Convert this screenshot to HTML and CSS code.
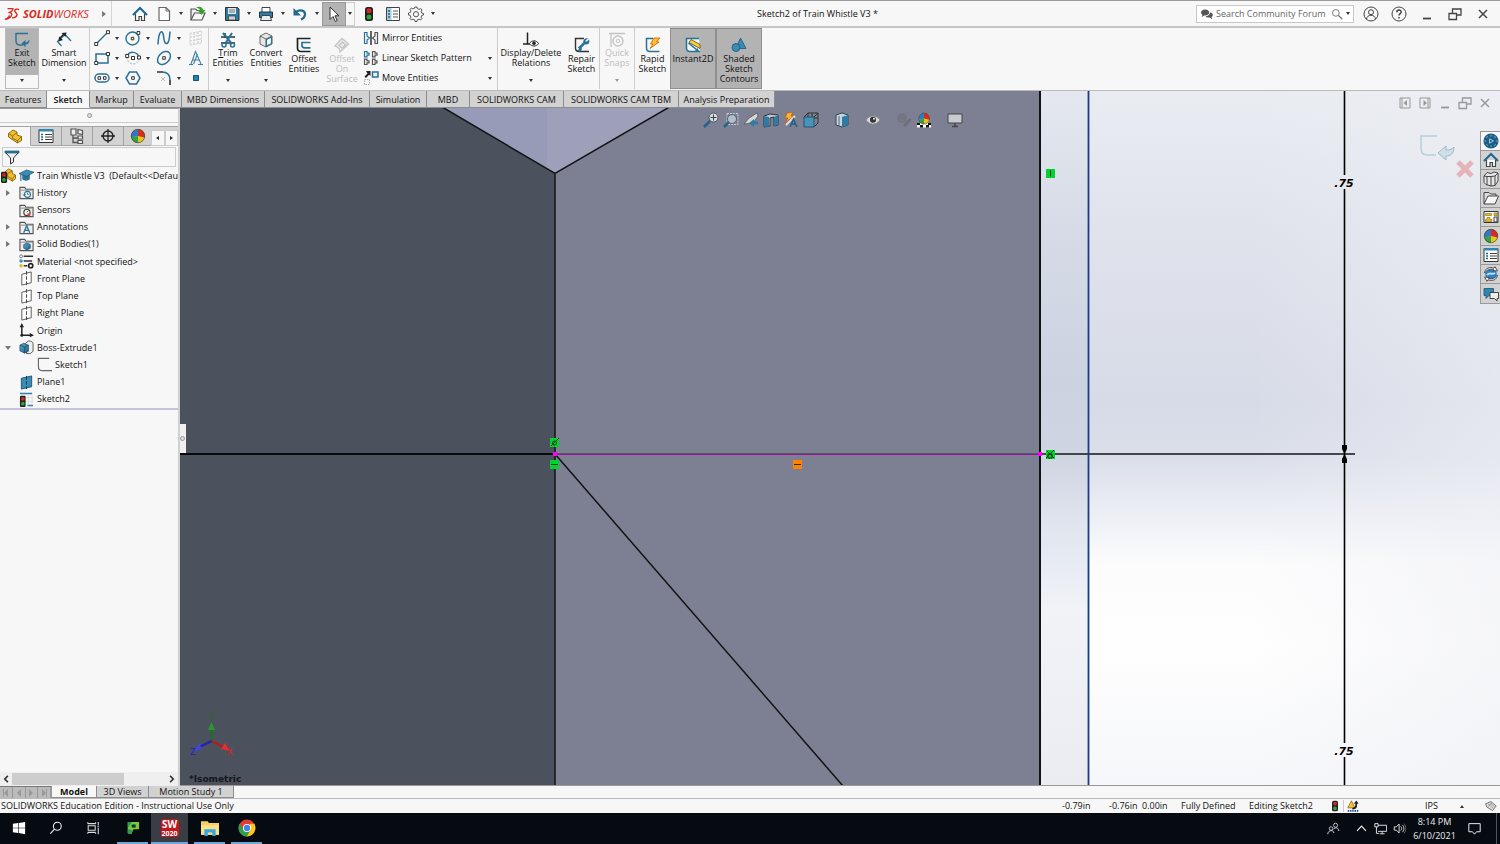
FILE: index.html
```html
<!DOCTYPE html>
<html lang="en">
<head>
<meta charset="utf-8">
<title>Sketch2 of Train Whistle V3 *</title>
<link rel="stylesheet" href="styles.css">
</head>
<body>
<svg class="sprite" aria-hidden="true">
  <defs>
    <linearGradient id="steel" x1="0" y1="0" x2="1" y2="1"><stop offset="0" stop-color="#5fa9cd"/><stop offset="1" stop-color="#1f5f86"/></linearGradient>
  </defs>
  <symbol id="i-home" viewBox="0 0 16 16"><path d="M3.500 8v6.500h3.500v-4h2.500v4h3V8" fill="#fff" stroke="#444" stroke-width="1.200"/><path d="M1 9 8 2l7 7" fill="none" stroke="#1e6690" stroke-width="2"/></symbol>
  <symbol id="i-new" viewBox="0 0 16 16"><path d="M3 1.500h7l3.500 3.500v9.500H3z" fill="#fff" stroke="#666" stroke-width="1.200"/><path d="M10 1.500V5h3.500" fill="none" stroke="#666"/></symbol>
  <symbol id="i-open" viewBox="0 0 16 16"><path d="M1 14V3h4.500L7 4.500h5v3" fill="#eee" stroke="#555" stroke-width="1.200"/><path d="M1 14 4.500 7H15l-3 7z" fill="#fafafa" stroke="#555" stroke-width="1.200"/><path d="M6 1.500c4-1.500 6.500-.5 7 2.500H15.500l-4 5-4-5H10C9.500 2.500 8 2 6 1.500z" fill="#35a02a"/></symbol>
  <symbol id="i-save" viewBox="0 0 16 16"><path d="M1.500 1.500h12l1.500 1.500v11.500H1.500z" fill="#2f7ba5" stroke="#333"/><path d="M4 2h8v6H4z" fill="#dde6eb"/><path d="M5 4h6M5 6h6" stroke="#777"/><path d="M4.500 10h7v4h-7z" fill="#c9d3d8" stroke="#333" stroke-width=".7"/></symbol>
  <symbol id="i-print" viewBox="0 0 16 16"><path d="M4 6V1.500h8V6" fill="#fff" stroke="#444"/><path d="M1.500 6h13v5.500h-13z" fill="#2f7ba5" stroke="#234"/><path d="M4 9.500h8l1.500 5h-11z" fill="#e8edf0" stroke="#444"/></symbol>
  <symbol id="i-undo" viewBox="0 0 16 16"><path d="M4 6c4-3 9.500-1.500 9 2.800-.3 2.200-1.500 3.500-4 4.700" fill="none" stroke="#23698f" stroke-width="2.200"/><path d="M1.500 2v7.500h7.500z" fill="#23698f"/></symbol>
  <symbol id="i-cursor" viewBox="0 0 16 16"><path d="M4 1v12.500l3-3 2.300 5 1.900-1-2.200-4.700H13z" fill="#fff" stroke="#333"/></symbol>
  <symbol id="i-light" viewBox="0 0 16 16"><rect x="4" y="1" width="8" height="14" rx="2.500" fill="#222"/><circle cx="8" cy="4.800" r="2.500" fill="#d22a20"/><circle cx="8" cy="11" r="2.500" fill="#2fa336"/></symbol>
  <symbol id="i-props" viewBox="0 0 16 16"><path d="M1.500 1.500h13v13h-13z" fill="#fff" stroke="#444"/><path d="M2 2h4.500v12H2z" fill="#a9cbdc"/><path d="M3 5h2M3 8h2M3 11h2" stroke="#1e6690" stroke-width="1.600"/><path d="M8 5h5M8 8h5M8 11h5" stroke="#555"/></symbol>
  <symbol id="i-props2" viewBox="0 0 16 16"><path d="M1 1.500h14v13H1z" fill="#fff" stroke="#333"/><path d="M1 1h14v2.500H1z" fill="#3185b0"/><path d="M3 6.500h2M3 9h2M3 11.500h2" stroke="#1e6690" stroke-width="1.600"/><path d="M7 6.500h7M7 9h7M7 11.500h7" stroke="#444"/></symbol>
  <symbol id="i-gear" viewBox="0 0 16 16"><path d="M7 1h2l.4 1.700 1.700.7 1.500-.9 1.400 1.400-.9 1.500.7 1.700L15.500 7.500v1.500l-1.700.4-.7 1.700.9 1.500-1.400 1.400-1.500-.9-1.700.7L9 15.500H7l-.4-1.700-1.700-.7-1.500.9L2 12.600l.9-1.500-.7-1.700L.5 9V7l1.700-.4.7-1.700L2 3.400 3.400 2l1.500.9 1.700-.7z" fill="none" stroke="#555"/><circle cx="8" cy="8.200" r="2.600" fill="none" stroke="#555"/></symbol>
  <symbol id="i-min" viewBox="0 0 16 16"><path d="M4 12.500h8" stroke="currentColor" stroke-width="1.800"/></symbol>
  <symbol id="i-restore" viewBox="0 0 16 16"><path d="M5.500 8V3H14v6H9M2 7.500h7.500v6H2z" fill="none" stroke="currentColor" stroke-width="1.300"/></symbol>
  <symbol id="i-close" viewBox="0 0 16 16"><path d="m4 4 8 8m0-8-8 8" stroke="currentColor" stroke-width="1.500"/></symbol>
  <symbol id="i-dockl" viewBox="0 0 16 16"><path d="M3 3h10v10H3zM5 3v10" fill="none" stroke="currentColor"/><path d="M10 5v6L6.500 8z" fill="currentColor"/></symbol>
  <symbol id="i-dockr" viewBox="0 0 16 16"><path d="M3 3h10v10H3zM11 3v10" fill="none" stroke="currentColor"/><path d="M6.500 5v6L10 8z" fill="currentColor"/></symbol>
  <symbol id="i-user" viewBox="0 0 16 16"><circle cx="8" cy="8" r="7" fill="none" stroke="#444"/><circle cx="8" cy="6.200" r="2.500" fill="none" stroke="#444"/><path d="M3.500 13c.5-5 8.500-5 9 0" fill="none" stroke="#444"/></symbol>
  <symbol id="i-help" viewBox="0 0 16 16"><circle cx="8" cy="8" r="7" fill="none" stroke="#444"/><path d="M5.800 6.300c0-3 4.400-3 4.400-.2 0 1.500-2.200 1.600-2.200 3.500M8 11v1.500" fill="none" stroke="#444" stroke-width="1.500"/></symbol>
  <symbol id="i-chat" viewBox="0 0 16 16"><path d="M5.500 2C2 2 0 4 0 6c0 1.500 1 2.500 2 3L1 12l3.500-2C9 10 11 8 11 6S9 2 5.500 2z" fill="#555"/><path d="M12 6c0 3-3 5-6 5 1 1.500 3.500 2 5.500 1.500L15 15l-1-3c3-2 2-5.500-2-6z" fill="#555"/></symbol>
  <symbol id="i-chat2" viewBox="0 0 16 16"><path d="M1 2.500h9.500v7H6l-3 3v-3H1z" fill="#2f86b0" stroke="#1c536f" stroke-width=".8"/><path d="M7 6.500h8.500v6H14v2.500L11.500 12.500H7z" fill="#eee" stroke="#444"/></symbol>
  <symbol id="i-search" viewBox="0 0 16 16"><circle cx="6.500" cy="6.500" r="4.500" fill="none" stroke="currentColor" stroke-width="1.300"/><path d="m10 10 5 5" stroke="currentColor" stroke-width="1.600"/></symbol>

  <symbol id="i-exit" viewBox="0 0 16 16"><path d="M14 1.500H2V9c0 3 1.500 4 4 4h3" fill="none" stroke="#2a7198" stroke-width="1.400"/><path d="M15.500 7.500c0 4-2 5-4 5v2.700L7.500 11.500l4-3.500v2.500c1.500 0 2.500-1 4-3z" fill="#2a7198"/></symbol>
  <symbol id="i-dim" viewBox="0 0 16 16"><path d="m5.500 14-4-4.500L9 2.500l6 6.500" fill="none" stroke="#2a7198" stroke-width="1.300"/><path d="m4 6 4-4" stroke="#222" stroke-width="1.500"/><path d="M2.500 9.500 3 4.500 7 8zM10.500.500 5.500 1 9.500 5z" fill="#222"/></symbol>
  <symbol id="i-line" viewBox="0 0 16 16"><path d="M2.500 13.500l11-11" stroke="#2a7198" stroke-width="1.500"/><path d="M.7 12.500h3v3h-3zM12.500.7h3v3h-3z" fill="#fff" stroke="#333"/></symbol>
  <symbol id="i-circle" viewBox="0 0 16 16"><circle cx="7.500" cy="8.500" r="6.500" fill="none" stroke="#2a7198" stroke-width="1.400"/><path d="M6.300 7.300h2.500v2.500H6.300zM12 1.500h2.800v2.800H12z" fill="#fff" stroke="#333"/></symbol>
  <symbol id="i-spline" viewBox="0 0 16 16"><path d="M2 14.500C2.500 5 4 1 6 2c2.500 1.500 1 11 4 11.500 2.500.5 3.500-4 4-12" fill="none" stroke="#2a7198" stroke-width="1.500"/></symbol>
  <symbol id="i-plane3" viewBox="0 0 16 16"><path d="M2 3.500 13.500 1v12L2 15zM2 7l11.500-2M2 11l11.500-2M6 3v12M10 2v12" fill="none" stroke="#ccc" stroke-dasharray="2 1"/></symbol>
  <symbol id="i-rect" viewBox="0 0 16 16"><path d="M2 4h12v9H2z" fill="none" stroke="#2a7198" stroke-width="1.500"/><path d="M.7 11.500h3v3h-3zM12.500 2.500h3v3h-3z" fill="#fff" stroke="#333"/></symbol>
  <symbol id="i-arc" viewBox="0 0 16 16"><path d="M2 6c2.500-5 10-5 12 1" fill="none" stroke="#2a7198" stroke-width="1.500"/><path d="M2 7c0 9 11 9 12 2" fill="none" stroke="#aaa" stroke-dasharray="2 1.500"/><path d="M.7 4.500h3v3h-3zM12.500 6h3v3h-3zM6.500 6.500h3v3h-3z" fill="#fff" stroke="#333"/></symbol>
  <symbol id="i-ellipse" viewBox="0 0 16 16"><ellipse cx="8" cy="8" rx="7.500" ry="5.300" transform="rotate(-45 8 8)" fill="none" stroke="#2a7198" stroke-width="1.500"/><path d="M6.700 6.700h2.600v2.600H6.700z" fill="#fff" stroke="#333"/></symbol>
  <symbol id="i-text" viewBox="0 0 16 16"><path d="M1 14.500h4M10 14.500h5M3 14 7.500 1.500 13 14M4.500 10h6.500M5.500 14l4-10" fill="none" stroke="#3b81a6" stroke-width="1.100"/></symbol>
  <symbol id="i-slot" viewBox="0 0 16 16"><rect x="1" y="4" width="14" height="8" rx="4" fill="none" stroke="#2a7198" stroke-width="1.500"/><path d="M4 6.700h2.600v2.600H4zM9.500 6.700H12v2.600H9.500z" fill="#fff" stroke="#333"/></symbol>
  <symbol id="i-poly" viewBox="0 0 16 16"><path d="M4.500 2h7L15 8l-3.500 6h-7L1 8z" fill="none" stroke="#2a7198" stroke-width="1.500"/><path d="M6.700 6.700h2.600v2.600H6.700z" fill="#fff" stroke="#333"/></symbol>
  <symbol id="i-fillet" viewBox="0 0 16 16"><path d="M1 2h6M14 10v5" stroke="#333" stroke-width="1.600"/><path d="M6 2c5 0 8 3 8 8" fill="none" stroke="#2a7198" stroke-width="1.600"/><path d="m5 7 4 4m0-4-4 4" stroke="#bbb"/></symbol>
  <symbol id="i-point" viewBox="0 0 16 16"><path d="M5.500 5.500h5v5h-5z" fill="#1f86b4" stroke="#174f6c"/></symbol>
  <symbol id="i-trim" viewBox="0 0 16 16"><path d="M1 5h14M1 11h14M5 1v5" stroke="#333" stroke-width="1.500"/><path d="m3 1 9 11M12 1 5 12" stroke="#2a7198" stroke-width="2"/><circle cx="4" cy="13" r="2" fill="none" stroke="#2a7198" stroke-width="1.500"/><circle cx="12.500" cy="13" r="2" fill="none" stroke="#2a7198" stroke-width="1.500"/></symbol>
  <symbol id="i-convert" viewBox="0 0 16 16"><path d="m2 4 6-3 6 3v8l-6 3-6-3z" fill="#e8e8e8" stroke="#666"/><path d="m2 4 6 3 6-3M8 7v8" fill="none" stroke="#666"/><path d="M8.500 7.500 13.500 5v6.500l-5 2.700z" fill="#fff" stroke="#2a7198" stroke-width="1.200"/></symbol>
  <symbol id="i-offset" viewBox="0 0 16 16"><path d="M14.500 1.500H1.500V11c0 2 1 3.500 3.500 3.500h9.500" fill="none" stroke="#222" stroke-width="1.700"/><path d="M14.500 5.500H6v3c0 1.500.5 2.300 2.500 2.300h6" fill="none" stroke="#2a7198" stroke-width="1.700"/></symbol>
  <symbol id="i-offsurf" viewBox="0 0 16 16"><path d="M1 9 8 1.500 14.500 7 6 15c0-3-2-5-5-6z" fill="#eee" stroke="#c4c4c4" stroke-width="1.300"/><path d="M5 8.500 8.500 5l3 3L8 11z" fill="none" stroke="#c4c4c4" stroke-width="1.500"/></symbol>
  <symbol id="i-mirror" viewBox="0 0 16 16"><path d="M8 1v14" stroke="#333" stroke-width="1.500"/><path d="M1.500 2.500v11H4V10l2.500-2L4 6V2.500z" fill="none" stroke="#2a7198" stroke-width="1.200"/><path d="M14.500 2.500v11H12V10L9.500 8 12 6V2.500z" fill="none" stroke="#555" stroke-width="1.200"/></symbol>
  <symbol id="i-linear" viewBox="0 0 16 16"><path d="M1.500 1.500H4v1.700h2v2H4v1.600H1.500z" fill="none" stroke="#2a7198" stroke-width="1.200"/><path d="M9.500 1.500H12v1.700h2v2h-2v1.600H9.500zM9.500 9.200H12v1.700h2v2h-2v1.600H9.500zM1.500 9.200H4v1.700h2v2H4v1.600H1.500z" fill="none" stroke="#555" stroke-width="1.200"/></symbol>
  <symbol id="i-move" viewBox="0 0 16 16"><path d="M9.500 2H15v5H9.500z" fill="none" stroke="#2a7198" stroke-width="1.500"/><path d="M7.500 1v5L6 4.700 3 8 1.500 6.500 4.500 3.500 3 1z" fill="#222"/><path d="M1.500 9.500h5v5h-5z" fill="none" stroke="#aaa" stroke-dasharray="1.500 1"/></symbol>
  <symbol id="i-relations" viewBox="0 0 16 16"><path d="M4.500.500v11M0 12h7" stroke="#222" stroke-width="1.500"/><path d="M6.500 11.500c2-3.500 7-3.500 9 0-2 3.300-7 3.300-9 0z" fill="#fff" stroke="#222"/><circle cx="11" cy="11.300" r="1.800" fill="#222"/></symbol>
  <symbol id="i-repair" viewBox="0 0 16 16"><path d="M10 1.500H1.500V11c0 2 1 3.500 3.500 3.500h10" fill="none" stroke="#333" stroke-width="1.400"/><path d="m5 11.500 6-6" stroke="#2a7198" stroke-width="2.500"/><path d="M14 1.500 11.500 3.500v1h1.500l2-2c1.500 4-1.500 6-5 4.500C8 4 10.500.5 14 1.500zM3 13l1.500-.3.500-1.500-1-1c3-1.500 5.500 2 2.500 4-1.500 1-3 .3-3.500-1.200z" fill="#2a7198"/></symbol>
  <symbol id="i-snaps" viewBox="0 0 16 16"><path d="M0 1.500h16M2 1v14" stroke="#c4c4c4" stroke-width="1.300"/><circle cx="9" cy="9" r="5" fill="none" stroke="#c4c4c4" stroke-width="1.400"/><circle cx="9" cy="9" r="1.700" fill="none" stroke="#c4c4c4"/></symbol>
  <symbol id="i-rapid" viewBox="0 0 16 16"><path d="M8 1.500H1.500V11c0 2 1 3.500 3.500 3.500h9.500" fill="none" stroke="#2a7198" stroke-width="1.500"/><path d="M9 1h6l-3.500 4H14L5 11.500 8 7H5.500z" fill="#fbc02d" stroke="#d36a12" stroke-width=".9"/></symbol>
  <symbol id="i-instant" viewBox="0 0 16 16"><path d="M14 1.500H1.500V11c0 2 1 3.500 3.500 3.500h10" fill="#eef3f6" stroke="#2a7198" stroke-width="1.500"/><path d="m4 5.500 2-3 9 5v4z" fill="#f6cf3c" stroke="#5a4a10" stroke-width=".8"/><path d="m3.500 6 8.500 7" stroke="#2a7198" stroke-width="1.600"/><path d="m14 14.500-4-.5 2.500-3z" fill="#2a7198"/></symbol>
  <symbol id="i-shaded" viewBox="0 0 16 16"><path d="M9.500 1 15 11.500H5z" fill="#3c8bb3" stroke="#1c5678" stroke-width=".8"/><circle cx="5" cy="10.500" r="4" fill="#3c8bb3" stroke="#1c5678" stroke-width=".8"/></symbol>

  <symbol id="i-part" viewBox="0 0 16 16"><path d="M1.500 5.500 6 2l4 2v3l4.500 1.500v4L10.500 15 1.500 9z" fill="#f0bf2e" stroke="#80600c" stroke-width=".9"/><path d="m1.500 5.500 4 2.500v2.500l5 2v2.500m0-2.500 4-4M5.500 8 10 4.500" fill="none" stroke="#80600c" stroke-width=".8"/></symbol>
  <symbol id="i-rootpart" viewBox="0 0 16 16"><path d="M4 4.500 8 1l4 2v3l3.500 1.500v4L12 14 4 9z" fill="#f0bf2e" stroke="#80600c" stroke-width=".9"/><path d="m7 6 5-3m0 8.500 3.500-4M7 6v3l5 2.500V14" fill="none" stroke="#80600c" stroke-width=".8"/><rect x="0" y="4" width="6.500" height="12" rx="1.500" fill="#222"/><circle cx="3.200" cy="7.200" r="2" fill="#d22a20"/><circle cx="3.200" cy="12.600" r="2" fill="#2fa336"/></symbol>
  <symbol id="i-config" viewBox="0 0 16 16"><path d="M4 7v7.500h5M4 10h5" fill="none" stroke="#555" stroke-width="1.300"/><path d="M2 1h5v6H2zM9 8h4.500v3H9zM9 12.500h4.500v3H9zM9 1.500l4.500 1v4L9 5.500z" fill="#eee" stroke="#555" stroke-width="1.200"/></symbol>
  <symbol id="i-target" viewBox="0 0 16 16"><circle cx="8" cy="8" r="5" fill="none" stroke="#222" stroke-width="1.400"/><path d="M8 1v14M1 8h14" stroke="#222" stroke-width="1.300"/></symbol>
  <symbol id="i-ball" viewBox="0 0 16 16"><circle cx="8" cy="8" r="7" fill="#e8c51e"/><path d="M8 8V1a7 7 0 0 1 6.800 8.500z" fill="#d62a22"/><path d="M8 8V1A7 7 0 0 0 1.200 9.500z" fill="#3079c8"/><path d="M8 8v7a7 7 0 0 1-6.800-5.500z" fill="#37a046"/><circle cx="8" cy="8" r="6.700" fill="none" stroke="#444" stroke-width=".7"/></symbol>
  <symbol id="i-filter" viewBox="0 0 16 16"><path d="M1.500 3.500 6.500 9v6l3-2V9l5-5.500z" fill="#eee" stroke="#333"/><path d="M1 2h14v2H1z" fill="#2a7fab" stroke="#1c536f" stroke-width=".7"/></symbol>
  <symbol id="i-cap" viewBox="0 0 16 16"><path d="M3.500 7v5c2 2 6 2 8 0V7z" fill="#2a7198"/><path d="M0 6 8 2l8 2.500L8 9z" fill="#3c8bb3" stroke="#174f6c" stroke-width=".7"/><path d="M2 7v7" stroke="#174f6c"/></symbol>
  <symbol id="i-folder" viewBox="0 0 16 16"><path d="M1 14.500v-12h5l1.500 2H15v10z" fill="#eee" stroke="#555" stroke-width="1.200"/><path d="M2 5.500h12" stroke="#888"/></symbol>
  <symbol id="i-history" viewBox="0 0 16 16"><use href="#i-folder"/><circle cx="9" cy="10" r="3.200" fill="#fff" stroke="#2a7198" stroke-width="1.200"/><path d="M9 8v2h1.500M4 10l1.800 1.500L7 9.500" fill="none" stroke="#2a7198"/></symbol>
  <symbol id="i-sensors" viewBox="0 0 16 16"><use href="#i-folder"/><circle cx="8.500" cy="10" r="3.300" fill="#fff" stroke="#333" stroke-width="1.200"/><path d="m8 10 2-2" stroke="#333"/><path d="M9 11h3v3H9z" fill="#d8452c"/></symbol>
  <symbol id="i-annot" viewBox="0 0 16 16"><use href="#i-folder"/><path d="M5 13.500 8.200 6l3.300 7.500M6.300 11H10" fill="none" stroke="#2a7198" stroke-width="1.400"/></symbol>
  <symbol id="i-bodies" viewBox="0 0 16 16"><use href="#i-folder"/><path d="m5 8 3.500-1.500L12 8v4l-3.500 1.800L5 12z" fill="url(#steel)" stroke="#174f6c" stroke-width=".7"/></symbol>
  <symbol id="i-material" viewBox="0 0 16 16"><path d="M5 2.500h10M5 7.500h9M5 12.500h4" stroke="#333" stroke-width="1.600"/><circle cx="2.200" cy="2.500" r="1.600" fill="#fff" stroke="#777"/><circle cx="2.200" cy="7.500" r="1.900" fill="#2a9bc9"/><circle cx="2.200" cy="12.500" r="1.900" fill="#efb820"/><circle cx="12.500" cy="12.500" r="2.200" fill="#fff" stroke="#222" stroke-width="1.700"/></symbol>
  <symbol id="i-plane" viewBox="0 0 16 16"><path d="M3 3.500 13 1v11.500L3 15z" fill="#fff" stroke="#555"/><path d="M8 0v16" stroke="#444" stroke-dasharray="4 1.500"/></symbol>
  <symbol id="i-plane1" viewBox="0 0 16 16"><path d="M2.500 3.500 13.500 1v11.500l-11 2.500z" fill="#3c8bb3" stroke="#1c5678"/><path d="M8 1v14" stroke="#123f57" stroke-dasharray="4 1.500"/></symbol>
  <symbol id="i-origin" viewBox="0 0 16 16"><path d="M3 3v10h10" fill="none" stroke="#222" stroke-width="1.600"/><path d="M.7 4.500 3 0l2.300 4.500zM11.500 10.700 16 13l-4.500 2.300z" fill="#222"/><circle cx="3" cy="13" r="1.600" fill="#222"/></symbol>
  <symbol id="i-boss" viewBox="0 0 16 16"><path d="M7 3.500 10 1c3 0 5 1 5 3v8l-3 2.500H8z" fill="#eee" stroke="#555"/><path d="m1 5.500 4-2 5 2v6.500L6 14l-5-2.500z" fill="url(#steel)" stroke="#174f6c" stroke-width=".8"/><path d="m1 5.500 5 2 4-2M6 7.500V14" fill="none" stroke="#174f6c" stroke-width=".8"/></symbol>
  <symbol id="i-sketch" viewBox="0 0 16 16"><path d="M13 1.500H1.500V10c0 3 2 4.500 4.500 4.500h10" fill="none" stroke="#666" stroke-width="1.200"/></symbol>
  <symbol id="i-sketch2" viewBox="0 0 16 16"><path d="M1 1.500h13M9 14.500h6" stroke="#2a7fab" stroke-width="1.600"/><path d="M7 6h8M7 10h8M10 3v11M14 3v11" stroke="#ddd"/><rect x="1" y="4" width="6" height="12" rx="1" fill="#222"/><circle cx="4" cy="7.200" r="2" fill="#d22a20"/><circle cx="4" cy="12.500" r="2" fill="#2fa336"/></symbol>

  <symbol id="i-zoomfit" viewBox="0 0 16 16"><path d="m1 15 6-6" stroke="#24638a" stroke-width="2.500"/><circle cx="10.500" cy="5.500" r="4.500" fill="#cfdbe3" stroke="#555"/><path d="M10.500 2.500v6M7.500 5.500h6" stroke="#444"/></symbol>
  <symbol id="i-zoomarea" viewBox="0 0 16 16"><path d="M4 1.500h11v11H4z" fill="none" stroke="#c8ccd4" stroke-dasharray="2 1"/><path d="m1 15 5-5" stroke="#24638a" stroke-width="2.500"/><circle cx="9" cy="7" r="4.500" fill="#b4bfcb" stroke="#4d6475"/></symbol>
  <symbol id="i-prev" viewBox="0 0 16 16"><path d="m1 12 5-6 8-5 1 3-5 7z" fill="#d6d6d6" stroke="#555" stroke-width=".8"/><path d="M15 9.500h-4V7l-5 4 5 4v-2.500h4z" fill="#2f7ba5"/></symbol>
  <symbol id="i-section" viewBox="0 0 16 16"><path d="m1 4 6-2 8 1v10l-4 1V5L7 6v8l-6 1z" fill="#bcc9d2" stroke="#333"/><path d="m1 4 5 1v9.500L1 15z" fill="#2f7ba5"/><path d="m15 3-4 2v9l4-1z" fill="#2f7ba5"/></symbol>
  <symbol id="i-dynannot" viewBox="0 0 16 16"><path d="m4 1 6-1-2 4h3L2 11l3-5H2z" fill="#fbb43a" stroke="#bd5b13" stroke-width=".8"/><path d="m3 13 9-9" stroke="#ddd" stroke-width="2"/><path d="m7 15 3.500-8L14 15M8 12h5" fill="none" stroke="#1f6187" stroke-width="1.500"/></symbol>
  <symbol id="i-orient" viewBox="0 0 16 16"><path d="M1 5 5 1h10v10l-4 4M11 5l4-4M5 1v4M15 6H5M9 1v4" fill="none" stroke="#333"/><path d="M1 5h10v10H1z" fill="#4a93b8" stroke="#1c5678"/></symbol>
  <symbol id="i-display" viewBox="0 0 16 16"><path d="m2 3 6-2 6 2v10l-6 2-6-2z" fill="#c6d6df" stroke="#345"/><path d="M8 5v10l6-2V3z" fill="#2f7ba5"/><path d="M5 4v10" stroke="#567"/></symbol>
  <symbol id="i-eye" viewBox="0 0 16 16"><path d="M1 8c3-5.500 11-5.500 14 0-3 5.500-11 5.500-14 0z" fill="#d5d5d8" stroke="#888"/><circle cx="8" cy="7.700" r="3" fill="#333"/><circle cx="9" cy="6.700" r="1" fill="#eee"/></symbol>
  <symbol id="i-appear" viewBox="0 0 16 16"><circle cx="6" cy="6" r="5" fill="#747684"/><path d="m7 13 7-7 1.500 2L9 15z" fill="#6c6e7c"/></symbol>
  <symbol id="i-scene" viewBox="0 0 16 16"><path d="M1 11h14v4.500H1z" fill="#fff"/><path d="M1 11h3v2H1zM12 11h3v2h-3zM4 13h3v2.500H4zM10 13h3v2.500h-3z" fill="#111"/><g transform="translate(1.500 0) scale(.82)"><use href="#i-ball" width="16" height="16"/></g></symbol>
  <symbol id="i-monitor" viewBox="0 0 16 16"><path d="M1 2h14v9H1z" fill="#c9cbd0" stroke="#444"/><path d="M8 11v3M5 14.500h6" stroke="#444" stroke-width="1.500"/></symbol>

  <symbol id="i-globe" viewBox="0 0 16 16"><circle cx="8" cy="8" r="7.600" fill="#1d5f86"/><path d="M3 4.500 5 3.500M7 2.800h2M11 3.500l2 1M3 11.500l2 1M7 13.200h2M11 12.500l2-1M2 7v2M14 7v2" stroke="#6fa3bf"/><path d="M6.500 5.800v4.400L10.500 8z" fill="none" stroke="#9cc6dc"/></symbol>
  <symbol id="i-books" viewBox="0 0 16 16"><path d="m1 5 3-3.500 4 1 3-1.500 4 1v8L12 14.500 8 15l-5-1.500-2-2z" fill="#e6e6e6" stroke="#444"/><path d="M4 5v9M8 5.500V15M12 5v9.500M1 5l3 .5h4l4-.5 3-3" fill="none" stroke="#444"/></symbol>
  <symbol id="i-folder2" viewBox="0 0 16 16"><path d="M1 14V2.500h5L7.500 4H13v2" fill="#ddd" stroke="#444"/><path d="M1 14 5 6h10.500L12 14z" fill="#f8f8f8" stroke="#444"/></symbol>
  <symbol id="i-palette" viewBox="0 0 16 16"><path d="M1 2.500h14v11H1z" fill="#fff" stroke="#333"/><path d="M2.500 4.500h6v2h-6zM11 4h3v2.500h-3zM4 8.500h3v2h2v2H2.500v-2H4z" fill="#e9bd2a" stroke="#86680f" stroke-width=".6"/><path d="M11 8h3v5h-3z" fill="#eee" stroke="#444"/></symbol>
  <symbol id="i-refresh" viewBox="0 0 16 16"><circle cx="8" cy="8" r="5.800" fill="#2d7fc4"/><path d="M4 9c3-3 5 0 8-2" stroke="#bde" stroke-width="2" fill="none"/><path d="M1.500 7C2 2 7 .5 11 2.200L12 .7l2.500 4.300-4.500-.5.500-1C7.500 2.500 4 3.500 1.500 7zM14.500 9c-.5 5-5.500 6.500-9.500 4.800l-1 1.500L1.500 11l4.500.5-.5 1c3 1 6.500 0 9-3.500z" fill="#eee" stroke="#333" stroke-width=".8"/></symbol>
  <symbol id="i-rebuild" viewBox="0 0 16 16"><path d="M1 14.500h14" stroke="#1f4f93" stroke-width="2.500" stroke-dasharray="2 1"/><path d="M6 1 1 10.500h9.500z" fill="#f3c433" stroke="#9b5b12"/><path d="M7 12.500c6 0 7-3.500 6.300-7.500H15.500l-3-4.500-3.500 4.500h2.200c.4 3-1 5-4.200 5.500z" fill="#222"/></symbol>
  <symbol id="i-tag" viewBox="0 0 16 16"><path d="m1 5 7-3 7 6-5 6-8-5z" fill="#ddd" stroke="#555"/><path d="m4 5 7 6M7 4l6 5M4 9l5-5" stroke="#777" stroke-width=".8"/></symbol>

  <symbol id="i-win" viewBox="0 0 16 16"><path d="m1 3.200 6-.9v5.300H1zM7.700 2.200 15 1v6.600H7.700zM1 8.400h6v5.300l-6-.9zM7.700 8.400H15V15l-7.300-1.200z" fill="#fff"/></symbol>
  <symbol id="i-find" viewBox="0 0 16 16"><circle cx="9.500" cy="6" r="4.500" fill="none" stroke="#eee" stroke-width="1.200"/><path d="M6.300 9.300 1.500 14.500" stroke="#eee" stroke-width="1.300"/></symbol>
  <symbol id="i-taskview" viewBox="0 0 16 16"><path d="M2.500 5.500h8v5h-8zM2 3V1.500M11 3V1.500M2 3h9M2 13v1.500M11 13v1.500M2 13h9M14 1v4M14 8v7M13 6.500h2" fill="none" stroke="#ddd" stroke-width="1.200"/></symbol>
  <symbol id="i-green" viewBox="0 0 16 16"><path d="M2 1h13v8.500H8.500L6 15l-4-1z" fill="#79c843"/><path d="M2 1h5L2 8zM2 14V9l5.500 1.500L6 15z" fill="#2e9b54"/><path d="M6.500 4H11v3.500H6.500z" fill="#083617"/></symbol>
  <symbol id="i-files" viewBox="0 0 16 16"><path d="M0 2h6l1 1.500h9V14H0z" fill="#f5cf63"/><path d="M0 5.500h16V14H0z" fill="#fbe08c"/><path d="M3 15V9h10v6h-3v-3H6v3z" fill="#36a6dd"/></symbol>
  <symbol id="i-chrome" viewBox="0 0 16 16"><circle cx="8" cy="8" r="7.500" fill="#e33b2e"/><path d="M1.500 4.250A7.500 7.500 0 0 0 8 15.500L11 9.500 5 9.700z" fill="#2da14c"/><path d="M14.500 4.300A7.500 7.500 0 0 1 8 15.500l3.200-6L10.500 4.300z" fill="#fbc91d"/><circle cx="8" cy="8" r="3.600" fill="#fff"/><circle cx="8" cy="8" r="2.800" fill="#4285e8"/></symbol>
  <symbol id="i-people" viewBox="0 0 16 16"><circle cx="10.500" cy="4" r="2.500" fill="none" stroke="#ddd"/><circle cx="5" cy="8" r="2.200" fill="none" stroke="#ddd"/><path d="M1 15c0-5 7-6 7.500-1.500M8 9c2-3 6-2.500 6.500 2" fill="none" stroke="#ddd" stroke-width="1.200"/></symbol>
  <symbol id="i-chev" viewBox="0 0 16 16"><path d="m2.500 11 5.500-6 5.500 6" fill="none" stroke="#eee" stroke-width="1.400"/></symbol>
  <symbol id="i-net" viewBox="0 0 16 16"><path d="M5 4h10.500v7.500H5M10 11.500V14M7 14.500h6M1 2h4v4H1zM3 6v8h3" fill="none" stroke="#ddd" stroke-width="1.200"/></symbol>
  <symbol id="i-vol" viewBox="0 0 16 16"><path d="M1.500 6H4l3.500-3.500v11L4 10H1.500zM9.500 5.500c1.500 1.500 1.500 3.500 0 5M11.500 3.500c2.500 2.500 2.500 6.500 0 9" fill="none" stroke="#ddd" stroke-width="1.200"/><path d="M13.500 2c3 3.500 3 8.500 0 12" fill="none" stroke="#777"/></symbol>
  <symbol id="i-note" viewBox="0 0 16 16"><path d="M1 2h14v10h-4.500L8 15l-2.500-3H1z" fill="none" stroke="#eee" stroke-width="1.200"/></symbol>
</svg>

<header class="titlebar">
  <div class="brand">
    <svg class="brand-mark" viewBox="0 0 18 16" aria-hidden="true"><path d="M4 2h6c0 3-3 4-5 4.500 4-.5 4.500 2 3 4S4 14 1 14c3-1 5-2.500 5-4.500" fill="none" stroke="#d9291c" stroke-width="1.500"/><path d="M17 3c-2-1-5-.5-5 1.500 0 1.500 3.500 3 2.500 5S11 13 9 12" fill="none" stroke="#d9291c" stroke-width="1.600"/></svg>
    <span class="brand-name"><b>SOLID</b>WORKS</span>
    <button class="brand-more" aria-label="Show menu"><i class="tri-right"></i></button>
  </div>
  <div class="quick">
    <button aria-label="Home"><svg class="ic"><use href="#i-home"/></svg></button>
    <button class="split" aria-label="New"><svg class="ic"><use href="#i-new"/></svg><i class="tri"></i></button>
    <button class="split" aria-label="Open"><svg class="ic"><use href="#i-open"/></svg><i class="tri"></i></button>
    <button class="split" aria-label="Save"><svg class="ic"><use href="#i-save"/></svg><i class="tri"></i></button>
    <button class="split" aria-label="Print"><svg class="ic"><use href="#i-print"/></svg><i class="tri"></i></button>
    <button class="split" aria-label="Undo"><svg class="ic"><use href="#i-undo"/></svg><i class="tri"></i></button>
    <button class="select-on" aria-label="Select"><svg class="ic"><use href="#i-cursor"/></svg></button>
    <button class="select-drop" aria-label="Select options"><i class="tri"></i></button>
    <button class="solo" aria-label="Rebuild"><svg class="ic"><use href="#i-light"/></svg></button>
    <button class="solo" aria-label="File properties"><svg class="ic"><use href="#i-props"/></svg></button>
    <button class="split options" aria-label="Options"><svg class="ic"><use href="#i-gear"/></svg><i class="tri"></i></button>
  </div>
  <h1 class="doc-title">Sketch2 of Train Whistle V3 *</h1>
  <div class="title-right">
    <label class="search"><svg class="ic-s"><use href="#i-chat"/></svg><input type="text" placeholder="Search Community Forum" aria-label="Search Community Forum"><svg class="ic-s"><use href="#i-search"/></svg><i class="tri"></i></label>
    <button aria-label="Account"><svg class="ic"><use href="#i-user"/></svg></button>
    <button aria-label="Help"><svg class="ic"><use href="#i-help"/></svg></button>
    <button aria-label="Minimize"><svg class="ic"><use href="#i-min"/></svg></button>
    <button aria-label="Restore"><svg class="ic"><use href="#i-restore"/></svg></button>
    <button aria-label="Close"><svg class="ic"><use href="#i-close"/></svg></button>
  </div>
</header>

<section class="ribbon" aria-label="Sketch tools">
  <button class="tool exit"><span class="face"><svg class="ic"><use href="#i-exit"/></svg><span>Exit<br>Sketch</span></span><i class="tri"></i></button>
  <button class="tool smart"><svg class="ic"><use href="#i-dim"/></svg><span>Smart<br>Dimension</span><i class="tri"></i></button>
  <div class="shapes">
    <button aria-label="Line"><svg class="ic"><use href="#i-line"/></svg><i class="tri"></i></button>
    <button aria-label="Circle"><svg class="ic"><use href="#i-circle"/></svg><i class="tri"></i></button>
    <button aria-label="Spline"><svg class="ic"><use href="#i-spline"/></svg><i class="tri"></i></button>
    <button aria-label="Plane"><svg class="ic"><use href="#i-plane3"/></svg></button>
    <button aria-label="Rectangle"><svg class="ic"><use href="#i-rect"/></svg><i class="tri"></i></button>
    <button aria-label="Arc"><svg class="ic"><use href="#i-arc"/></svg><i class="tri"></i></button>
    <button aria-label="Ellipse"><svg class="ic"><use href="#i-ellipse"/></svg><i class="tri"></i></button>
    <button aria-label="Text"><svg class="ic"><use href="#i-text"/></svg></button>
    <button aria-label="Slot"><svg class="ic"><use href="#i-slot"/></svg><i class="tri"></i></button>
    <button aria-label="Polygon"><svg class="ic"><use href="#i-poly"/></svg></button>
    <button aria-label="Fillet"><svg class="ic"><use href="#i-fillet"/></svg><i class="tri"></i></button>
    <button aria-label="Point"><svg class="ic"><use href="#i-point"/></svg></button>
  </div>
  <button class="tool"><svg class="ic"><use href="#i-trim"/></svg><span><u>T</u>rim<br>Entities</span><i class="tri"></i></button>
  <button class="tool"><svg class="ic"><use href="#i-convert"/></svg><span>Convert<br>Entities</span><i class="tri"></i></button>
  <button class="tool low"><svg class="ic"><use href="#i-offset"/></svg><span>Offset<br>Entities</span></button>
  <button class="tool low" disabled><svg class="ic"><use href="#i-offsurf"/></svg><span>Offset<br>On<br>Surface</span></button>
  <div class="rows">
    <button><svg class="ic"><use href="#i-mirror"/></svg><span>Mirror Entities</span></button>
    <button><svg class="ic"><use href="#i-linear"/></svg><span>Linear Sketch Pattern</span><i class="tri"></i></button>
    <button><svg class="ic"><use href="#i-move"/></svg><span>Move Entities</span><i class="tri"></i></button>
  </div>
  <button class="tool wide"><svg class="ic"><use href="#i-relations"/></svg><span>Display/Delete<br>Relations</span><i class="tri"></i></button>
  <button class="tool low repair"><svg class="ic"><use href="#i-repair"/></svg><span>Repair<br>Sketch</span></button>
  <button class="tool boxed" disabled><svg class="ic"><use href="#i-snaps"/></svg><span>Quick<br>Snaps</span><i class="tri"></i></button>
  <button class="tool low rapid"><svg class="ic"><use href="#i-rapid"/></svg><span>Rapid<br>Sketch</span></button>
  <button class="tool low on"><svg class="ic"><use href="#i-instant"/></svg><span>Instant2D</span></button>
  <button class="tool low on"><svg class="ic"><use href="#i-shaded"/></svg><span>Shaded<br>Sketch<br>Contours</span></button>
</section>

<main class="work">
  <section class="viewport" aria-label="Graphics area">
    <svg class="model" viewBox="180 91 1320 694" preserveAspectRatio="none" role="img" aria-label="Train whistle model with open sketch">
      <defs>
        <linearGradient id="sky" x1="0" y1="0" x2="0" y2="1">
          <stop offset="0" stop-color="#e9ecf1"/><stop offset=".2" stop-color="#e0e3ec"/><stop offset=".45" stop-color="#d7dbe7"/><stop offset=".53" stop-color="#dbdfea"/><stop offset=".6" stop-color="#ebedf4"/><stop offset=".68" stop-color="#fcfcfd"/><stop offset=".8" stop-color="#fefefe"/><stop offset="1" stop-color="#f6f7fa"/>
        </linearGradient>
        <linearGradient id="edge" x1="0" y1="0" x2="0" y2="1">
          <stop offset="0" stop-color="#e4e8ee"/><stop offset=".2" stop-color="#d7dbe7"/><stop offset=".42" stop-color="#cbd2e0"/><stop offset=".53" stop-color="#d0d5e2"/><stop offset=".62" stop-color="#dfe4ee"/><stop offset=".75" stop-color="#f1f3f7"/><stop offset="1" stop-color="#ebecf2"/>
        </linearGradient>
        <linearGradient id="fade" x1="0" y1="0" x2="1" y2="0"><stop offset=".4" stop-color="#eff0f5" stop-opacity="0"/><stop offset="1" stop-color="#eff0f5" stop-opacity=".55"/></linearGradient>
      </defs>
      <path d="M1040 91h460v695h-460z" fill="url(#sky)"/>
      <path d="M1088 91h412v695h-412z" fill="url(#fade)"/>
      <path d="M1040 91h48v695h-48z" fill="url(#edge)"/>
      <path d="M180 91h375v695H180z" fill="#4c525d"/>
      <path d="M555 91h485v695H555z" fill="#7d8092"/>
      <path d="M415 91h282L555 173.500z" fill="#9da0b8"/>
      <path d="M415 91h132v78z" fill="#989bb8"/>
      <g fill="none" stroke="#121316" stroke-width="1.500">
        <path d="M415 91l140 82.500L697 91M555 173.500V786M555 454l288 332"/>
        <path d="M180 454h375" stroke="#08090c" stroke-width="2"/>
        <path d="M1040 91v695" stroke-width="2"/>
        <path d="M1040 454h315" stroke-width="1.600"/>
      </g>
      <path d="M1088.500 91v695" stroke="#1b3c85" stroke-width="1.800"/>
      <path d="M555 453.500h485" stroke="#555767"/><path d="M555 454.500h485" stroke="#9a1597"/>
      <path d="M1344.500 91v84m0 14v554m0 14v29" stroke="#000" stroke-width="1.600"/>
      <path d="M1342 445h5v4l-2.500 5-2.500-5zM1342 463h5v-4l-2.500-5-2.500 5z"/>
      <text class="dim" x="1344" y="187">.75</text><text class="dim" x="1344" y="755">.75</text>
      <g fill="#00d22f"><path d="M1046 169h9v9h-9zM1046 450h9v9h-9zM550 438h9v9h-9zM550 460h9v9h-9z"/></g>
      <path d="M793 460h9v9h-9z" fill="#ff8200"/>
      <path d="M1050.500 170.500v6M794 464.500h7M551 464.500h7M551 446l8-8M1046 458l8-8m-7 1 7 7m-6-4h4v4h-4z" fill="none" stroke="#143a16"/>
      <circle cx="554.500" cy="443" r="2" fill="none" stroke="#143a16"/>
      <path d="M553 452h4v4h-4zM1038 452h4v4h-4z" fill="#f0f"/>
      <g stroke-width="2.500" fill="none"><path d="M211.500 741v-14" stroke="#1e7020"/><path d="M211.500 741l12 6" stroke="#b51c1c"/><path d="M211.500 741l-12 6" stroke="#2222b4"/></g>
      <path d="M208 730l3.500-8 3.500 8z" fill="#2e9430"/><path d="M221 749l4-6 5 8z" fill="#e03030"/><path d="M202 749l-3-6-5 8z" fill="#4343e6"/>
      <text class="axis" x="209" y="721" fill="#1e7020">Y</text><text class="axis" x="227" y="755" fill="#e01c1c">X</text><text class="axis" x="190" y="755" fill="#1f1fd0">Z</text>
      <text class="view-name" x="189" y="782">*Isometric</text>
    </svg>
    <div class="hud" role="toolbar" aria-label="View tools">
      <button aria-label="Zoom to fit"><svg class="ic"><use href="#i-zoomfit"/></svg></button>
      <button aria-label="Zoom to area"><svg class="ic"><use href="#i-zoomarea"/></svg></button>
      <button aria-label="Previous view"><svg class="ic"><use href="#i-prev"/></svg></button>
      <button aria-label="Section view"><svg class="ic"><use href="#i-section"/></svg></button>
      <button aria-label="Dynamic annotation views"><svg class="ic"><use href="#i-dynannot"/></svg></button>
      <button class="gap" aria-label="View orientation"><svg class="ic"><use href="#i-orient"/></svg></button>
      <button class="gap" aria-label="Display style"><svg class="ic"><use href="#i-display"/></svg></button>
      <button class="gap" aria-label="Hide or show items"><svg class="ic"><use href="#i-eye"/></svg></button>
      <button aria-label="Edit appearance"><svg class="ic"><use href="#i-appear"/></svg></button>
      <button class="gap" aria-label="Apply scene"><svg class="ic"><use href="#i-scene"/></svg></button>
      <button aria-label="View settings"><svg class="ic"><use href="#i-monitor"/></svg></button>
    </div>
    <div class="doc-controls">
      <button aria-label="Dock left"><svg class="ic"><use href="#i-dockl"/></svg></button>
      <button aria-label="Dock right"><svg class="ic"><use href="#i-dockr"/></svg></button>
      <button aria-label="Minimize document"><svg class="ic"><use href="#i-min"/></svg></button>
      <button aria-label="Restore document"><svg class="ic"><use href="#i-restore"/></svg></button>
      <button aria-label="Close document"><svg class="ic"><use href="#i-close"/></svg></button>
    </div>
    <div class="confirm">
      <button aria-label="Exit sketch"><svg width="36" height="28" viewBox="0 0 36 28"><path d="M18 2H2v12c0 4 2 7 6 7h9" fill="none" stroke="#b5cfdd" stroke-width="1.500"/><path d="M35 13c0 7-4 9-8 9v4l-8-7 8-7v4c4 0 6-1 8-3z" fill="#cfdfe7" stroke="#9fb9c7"/></svg></button>
      <button class="cancel" aria-label="Cancel sketch"><svg width="20" height="20" viewBox="0 0 20 20"><path d="m3 3 14 14M17 3 3 17" stroke="#e4b4b8" stroke-width="5"/></svg></button>
    </div>
    <nav class="task-pane" aria-label="Task pane">
      <button class="first" aria-label="Resources"><svg class="ic"><use href="#i-globe"/></svg></button>
      <button aria-label="Home"><svg class="ic"><use href="#i-home"/></svg></button>
      <button aria-label="Design library"><svg class="ic"><use href="#i-books"/></svg></button>
      <button aria-label="File explorer"><svg class="ic"><use href="#i-folder2"/></svg></button>
      <button aria-label="View palette"><svg class="ic"><use href="#i-palette"/></svg></button>
      <button aria-label="Appearances"><svg class="ic"><use href="#i-ball"/></svg></button>
      <button aria-label="Custom properties"><svg class="ic"><use href="#i-props2"/></svg></button>
      <button aria-label="Updates"><svg class="ic"><use href="#i-refresh"/></svg></button>
      <button aria-label="Forum"><svg class="ic"><use href="#i-chat2"/></svg></button>
    </nav>
    <div class="splitter"><i class="dot"></i></div>
  </section>

  <nav class="cmd-tabs" aria-label="Command tabs">
    <button class="w47">Features</button><button class="w43 active">Sketch</button><button class="w44">Markup</button><button class="w48">Evaluate</button><button class="w83">MBD Dimensions</button><button class="w105">SOLIDWORKS Add-Ins</button><button class="w58">Simulation</button><button class="w43">MBD</button><button class="w94">SOLIDWORKS CAM</button><button class="w115">SOLIDWORKS CAM TBM</button><button class="w95">Analysis Preparation</button>
  </nav>

  <aside class="panel">
    <div class="grip"><i class="dot"></i></div>
    <div class="panel-tabs">
      <button class="active" aria-label="Feature tree"><svg class="ic"><use href="#i-part"/></svg></button>
      <button aria-label="Properties"><svg class="ic"><use href="#i-props2"/></svg></button>
      <button aria-label="Configurations"><svg class="ic"><use href="#i-config"/></svg></button>
      <button aria-label="Dimensions"><svg class="ic"><use href="#i-target"/></svg></button>
      <button class="cut" aria-label="Display"><svg class="ic"><use href="#i-ball"/></svg></button>
      <div class="steps-box">
        <button aria-label="Scroll left"><i class="tri-left"></i></button>
        <button aria-label="Scroll right"><i class="tri-right"></i></button>
      </div>
    </div>
    <label class="filter"><svg class="ic"><use href="#i-filter"/></svg><input type="text" aria-label="Filter"></label>
    <ul class="tree">
      <li class="root"><svg class="ic"><use href="#i-rootpart"/></svg><svg class="ic"><use href="#i-cap"/></svg><span>Train Whistle V3&nbsp; (Default&lt;&lt;Defau</span></li>
      <li><i class="tri-right"></i><svg class="ic"><use href="#i-history"/></svg><span>History</span></li>
      <li><svg class="ic"><use href="#i-sensors"/></svg><span>Sensors</span></li>
      <li><i class="tri-right"></i><svg class="ic"><use href="#i-annot"/></svg><span>Annotations</span></li>
      <li><i class="tri-right"></i><svg class="ic"><use href="#i-bodies"/></svg><span>Solid Bodies(1)</span></li>
      <li><svg class="ic"><use href="#i-material"/></svg><span>Material &lt;not specified&gt;</span></li>
      <li><svg class="ic"><use href="#i-plane"/></svg><span>Front Plane</span></li>
      <li><svg class="ic"><use href="#i-plane"/></svg><span>Top Plane</span></li>
      <li><svg class="ic"><use href="#i-plane"/></svg><span>Right Plane</span></li>
      <li><svg class="ic"><use href="#i-origin"/></svg><span>Origin</span></li>
      <li><i class="tri"></i><svg class="ic"><use href="#i-boss"/></svg><span>Boss-Extrude1</span></li>
      <li class="child"><svg class="ic"><use href="#i-sketch"/></svg><span>Sketch1</span></li>
      <li><svg class="ic"><use href="#i-plane1"/></svg><span>Plane1</span></li>
      <li><svg class="ic"><use href="#i-sketch2"/></svg><span>Sketch2</span></li>
    </ul>
    <div class="rollback"></div>
    <div class="hscroll"><button aria-label="Scroll left"><svg viewBox="0 0 8 8"><path d="M5.500 1.500 3 4l2.500 2.500"/></svg></button><div class="thumb"></div><button aria-label="Scroll right"><svg viewBox="0 0 8 8"><path d="M2.500 1.500 5 4 2.500 6.500"/></svg></button></div>
  </aside>
</main>

<nav class="doc-tabs" aria-label="Document views">
  <div class="steps"><button class="end-l" aria-label="First"><i class="tri-left"></i></button><button aria-label="Previous"><i class="tri-left"></i></button><button aria-label="Next"><i class="tri-right"></i></button><button class="end-r" aria-label="Last"><i class="tri-right"></i></button></div>
  <button class="w45 active">Model</button><button class="w52">3D Views</button><button class="w85">Motion Study 1</button>
</nav>

<footer class="status">
  <span class="edition">SOLIDWORKS Education Edition - Instructional Use Only</span>
  <span class="s-x">-0.79in</span><span class="s-y">-0.76in</span><span class="s-z">0.00in</span>
  <span class="s-def">Fully Defined</span><span class="s-edit">Editing Sketch2</span>
  <svg class="ic-s"><use href="#i-light"/></svg><i class="bar"></i><svg class="ic-s"><use href="#i-rebuild"/></svg>
  <span class="s-unit">IPS</span><button aria-label="Units"><i class="tri-up"></i></button><svg class="ic-s tag"><use href="#i-tag"/></svg>
</footer>

<nav class="taskbar" aria-label="Taskbar">
  <button aria-label="Start"><svg class="ic"><use href="#i-win"/></svg></button>
  <button aria-label="Search"><svg class="ic"><use href="#i-find"/></svg></button>
  <button aria-label="Task view"><svg class="ic"><use href="#i-taskview"/></svg></button>
  <button class="open" aria-label="Editor"><svg class="ic"><use href="#i-green"/></svg></button>
  <button class="open current" aria-label="SolidWorks 2020"><span class="sw"><b>SW</b><small>2020</small></span></button>
  <button class="open" aria-label="File Explorer"><svg class="ic big"><use href="#i-files"/></svg></button>
  <button class="open" aria-label="Chrome"><svg class="ic big"><use href="#i-chrome"/></svg></button>
  <div class="tray">
    <button class="people" aria-label="People"><svg class="ic-s"><use href="#i-people"/></svg></button>
    <button aria-label="Hidden icons"><svg class="ic-s"><use href="#i-chev"/></svg></button>
    <button aria-label="Network"><svg class="ic-s"><use href="#i-net"/></svg></button>
    <button aria-label="Volume"><svg class="ic-s"><use href="#i-vol"/></svg></button>
    <time>8:14 PM<br>6/10/2021</time>
    <button class="notes" aria-label="Notifications"><svg class="ic-s"><use href="#i-note"/></svg></button>
  </div>
</nav>
</body>
</html>
```
FILE: styles.css
```css
* { box-sizing: border-box; }

body {
  margin: 0;
  min-height: 100vh;
  display: flex;
  flex-direction: column;
  background: #f7f7f7;
  color: #111;
  font: 9px/10px "Open Sans", "Noto Sans", sans-serif;
  overflow: hidden;
}

button {
  display: flex;
  align-items: center;
  justify-content: center;
  padding: 0;
  border: 0;
  background: none;
  color: inherit;
  font: inherit;
}

input {
  min-width: 0;
  flex: 1;
  padding: 0;
  border: 0;
  outline: 0;
  background: none;
  font: inherit;
}

.sprite { position: absolute; width: 0; height: 0; }
.ic { width: 16px; height: 16px; flex: none; }
.ic-s { width: 12px; height: 12px; flex: none; }
.big { width: 18px; height: 18px; }

.tri, .tri-up, .tri-left, .tri-right { width: 0; height: 0; flex: none; border: 2px solid transparent; }
.tri { border-top: 3px solid #333; border-bottom: 0; }
.tri-up { border-bottom: 3px solid #333; border-top: 0; }
.tri-left { border-right: 3px solid #222; border-left: 0; }
.tri-right { border-left: 3px solid #222; border-right: 0; }
.dot { width: 5px; height: 5px; border: 1px solid #999; border-radius: 50%; background: #ddd; }

/* Title bar */
.titlebar {
  display: flex;
  align-items: center;
  height: 28px;
  border-top: 1px solid #9a9a9a;
  border-bottom: 2px solid #c6c6c6;
}
.brand {
  display: flex;
  align-items: center;
  align-self: stretch;
  width: 112px;
  padding-left: 4px;
  border-right: 1px solid #d4d4d4;
  color: #d9291c;
}
.brand-mark { width: 16px; height: 16px; margin-right: 3px; }
.brand-name { font: italic 11px/14px "Open Sans", sans-serif; }
.brand-more { margin-left: auto; width: 14px; height: 20px; }
.brand-more .tri-right { border-width: 3px 0 3px 4px; border-left-color: #777; }
.quick { display: flex; align-items: center; align-self: stretch; padding-left: 16px; }
.quick button { height: 24px; width: 24px; }
.quick .split { width: 34px; gap: 7px; justify-content: flex-end; }
.quick .split:nth-child(2) { width: 31px; }
.quick .options { width: 30px; }
.quick .select-on { width: 24px; margin-left: 3px; background: #b3b3b3; border: 1px solid #999; }
.quick .select-drop { width: 9px; border: 1px solid #ccc; border-left: 0; }
.quick .select-drop + .solo { margin-left: 2px; }
.doc-title {
  flex: 1;
  margin: 0;
  padding-left: 4px;
  text-align: center;
  font-size: 9px;
  font-weight: 400;
}
.title-right { display: flex; align-items: center; padding-right: 3px; }
.title-right button { width: 28px; height: 24px; color: #444; }
.search {
  display: flex;
  align-items: center;
  gap: 3px;
  width: 158px;
  height: 18px;
  margin-right: 3px;
  padding: 0 3px 0 4px;
  border: 1px solid #c8c8c8;
  background: #fff;
  color: #777;
}
.search input::placeholder { color: #666; opacity: 1; }

/* Ribbon */
.ribbon {
  display: flex;
  height: 63px;
  padding-left: 5px;
  border-bottom: 1px solid #bbb;
}
.tool {
  flex-direction: column;
  justify-content: flex-start;
  width: 38px;
  height: 61px;
  padding-top: 4px;
  text-align: center;
}
.tool > .tri { margin-top: auto; margin-bottom: 7px; }
.tool.low { padding-top: 9px; }
.tool.low > span { margin-top: 1px; }
.tool:disabled { color: #bdbdbd; }
.tool:disabled .tri { border-top-color: #999; }
.tool.exit { width: 34px; padding: 0; border: 1px solid #bbb; }
.tool.exit > .tri { margin-bottom: 6px; }
.exit .face {
  display: flex;
  flex-direction: column;
  align-items: center;
  align-self: stretch;
  height: 46px;
  padding-top: 3px;
  background: #b3b3b3;
}
.tool.smart { width: 50px; }
.shapes {
  display: grid;
  grid-template-columns: 31px 31px 32px 20px;
  grid-auto-rows: 20px;
  padding-left: 4px;
  border-left: 1px solid #ccc;
  border-right: 1px solid #ccc;
}
.shapes button { justify-content: flex-start; gap: 5px; }
.rows { display: grid; grid-auto-rows: 20px; width: 137px; padding-left: 2px; border-right: 1px solid #ccc; }
.rows button { justify-content: flex-start; gap: 3px; padding-right: 5px; }
.rows .tri { margin-left: auto; }
.tool.wide { width: 66px; }
.tool.repair { width: 36px; border-right: 1px solid #ccc; }
.tool.boxed { width: 35px; border-right: 1px solid #ccc; }
.tool.rapid { width: 35px; }
.tool.on { width: 46px; background: #b3b3b3; border: 1px solid #8e8e8e; padding-top: 8px; }

/* Workspace: the viewport runs underneath the command tabs */
.work {
  flex: 1;
  display: grid;
  grid-template-columns: 180px 1fr;
  grid-template-rows: 17px 1fr;
  min-height: 0;
}
.viewport { position: relative; grid-area: 1 / 2 / 3 / 3; min-height: 0; overflow: hidden; border-bottom: 1px solid #999; }
.model { position: absolute; inset: 0; width: 100%; height: 100%; }
.dim { font: italic 700 11px "DejaVu Sans", sans-serif; text-anchor: middle; }
.axis { font: 8px "DejaVu Sans", sans-serif; }
.view-name { font: 700 9px "DejaVu Sans", sans-serif; fill: #15171a; }

.cmd-tabs { grid-area: 1 / 1 / 2 / 3; justify-self: start; display: flex; z-index: 1; }
.cmd-tabs button, .doc-tabs > button {
  background: #d2d2d2;
  border-right: 1px solid #8c8c8c;
  border-bottom: 1px solid #8c8c8c;
  white-space: nowrap;
}
.cmd-tabs button { padding-top: 2px; }
.cmd-tabs .active { background: #f7f7f7; border-bottom-color: #f7f7f7; font-weight: 600; }
.w43 { width: 43px; } .w44 { width: 44px; } .w45 { width: 45px; } .w47 { width: 47px; }
.w48 { width: 48px; } .w52 { width: 52px; } .w58 { width: 57px; } .w83 { width: 83px; }
.w85 { width: 85px; } .w94 { width: 94px; } .w95 { width: 96px; } .w105 { width: 105px; }
.w115 { width: 115px; }

.hud { position: absolute; top: 20px; left: calc(50% - 139px); display: flex; }
.hud button { width: 20px; height: 17px; }
.hud .gap { margin-right: 11px; }
.doc-controls { position: absolute; top: 4px; right: 5px; display: flex; color: #999; }
.doc-controls button { width: 20px; height: 16px; }
.confirm { position: absolute; top: 43px; right: 25px; display: flex; align-items: flex-start; }
.confirm .cancel { margin-top: 25px; }
.task-pane { position: absolute; top: 40px; right: 0; width: 20px; border: 1px solid #999; border-right: 0; background: #d2d2d2; }
.task-pane button { width: 19px; height: 19px; border-bottom: 1px solid #999; }
.task-pane button:last-child { border-bottom: 0; }
.task-pane .first { background: #f7f7f7; }
.splitter {
  position: absolute;
  left: 0;
  top: 333px;
  display: flex;
  align-items: center;
  width: 6px;
  height: 29px;
  background: #f0f0f0;
}

/* Feature tree panel */
.panel {
  grid-area: 2 / 1 / 3 / 2;
  display: flex;
  flex-direction: column;
  min-width: 0;
  border-top: 1px solid #999;
  border-right: 2px solid #d0d0d0;
}
.grip { display: flex; align-items: center; justify-content: center; height: 14px; border-bottom: 1px solid #ccc; }
.panel-tabs { display: flex; height: 24px; padding-top: 3px; }
.panel-tabs > button { flex: none; width: 31px; height: 20px; background: #d2d2d2; border: solid #a5a5a5; border-width: 1px 1px 1px 0; }
.panel-tabs > .active { background: #f7f7f7; border-bottom-color: #f7f7f7; }
.panel-tabs > .cut { width: 27px; border-right: 0; }
.steps-box { display: flex; align-items: flex-end; flex: 1; height: 20px; border-top: 1px solid #a5a5a5; background: #d2d2d2; }
.steps-box button { flex: 1; height: 16px; background: #f7f7f7; border: 1px solid #ccc; }
.filter {
  display: flex;
  align-items: center;
  height: 20px;
  margin: 0 2px;
  padding-left: 1px;
  border: 1px solid #ccc;
}
.tree {
  display: grid;
  grid-template-rows: repeat(14, 1fr);
  height: 241px;
  margin: 0;
  padding: 0;
  list-style: none;
}
.tree li { display: flex; align-items: center; gap: 3px; padding-left: 19px; white-space: nowrap; }
.tree .ic { width: 15px; height: 15px; }
.tree .root { padding-left: 1px; gap: 3px; }
.tree .child { padding-left: 37px; }
.tree i { border-width: 3px 0 3px 4px; border-left-color: #777; margin: 0 6px 0 -13px; }
.tree .tri { border-width: 4px 3px 0; border-color: #777 transparent; margin: 0 5px 0 -14px; }
.rollback { height: 2px; background: #c3c3dc; }
.hscroll { display: flex; align-items: center; height: 14px; margin-top: auto; background: #efefef; }
.hscroll button { width: 12px; height: 14px; }
.hscroll button:last-child { margin-left: auto; }
.hscroll svg { width: 10px; height: 10px; fill: none; stroke: #333; stroke-width: 1.3; }
.hscroll .thumb { width: 112px; height: 12px; background: #cdcdcd; }

/* Document tabs */
.doc-tabs { display: flex; height: 13px; border-bottom: 1px solid #bbb; }
.doc-tabs .active { background: #f7f7f7; font-weight: 700; }
.steps { display: flex; width: 52px; border-top: 1px solid #777; border-right: 1px solid #999; background: #bbb; }
.steps button { flex: 1; border-right: 1px solid #999; }
.steps .tri-left { border-width: 4px 4px 4px 0; border-right-color: #999; }
.steps .tri-right { border-width: 4px 0 4px 4px; border-left-color: #999; }
.steps .end-l::before, .steps .end-r::after { content: ""; width: 1px; height: 8px; background: #999; }

/* Status bar */
.status { display: flex; align-items: center; height: 14px; padding-right: 3px; white-space: nowrap; }
.edition { flex: 1; padding-left: 1px; }
.s-x { width: 47px; }
.s-y { width: 33px; }
.s-z { width: 39px; }
.s-def { width: 68px; }
.s-edit { width: 80px; }
.bar { width: 1px; height: 12px; margin: 0 3px 0 2px; background: #ccc; }
.s-unit { width: 35px; margin-left: 66px; }
.tag { margin-left: 21px; }

/* Taskbar */
.taskbar { display: flex; height: 31px; background: #060b12; color: #eee; }
.taskbar > button { width: 37px; border-bottom: 2px solid transparent; }
.taskbar .ic { width: 14px; height: 14px; }
.taskbar .big { width: 18px; height: 18px; }
.taskbar .open { width: 31px; margin-left: 6px; border-bottom-color: #6fa8d6; }
.taskbar .open.current { width: 37px; margin-left: 3px; background: #3a3e44; }
.sw { display: flex; flex-direction: column; align-items: center; width: 18px; height: 18px; background: #c5161d; border-radius: 3px; color: #fff; }
.sw b { font-size: 10px; line-height: 11px; }
.sw small { font-size: 7px; line-height: 7px; font-weight: 700; }
.tray { display: flex; align-items: center; margin-left: auto; margin-right: 3px; padding-right: 8px; border-right: 1px solid #555; }
.tray button { width: 19px; height: 31px; }
.tray .people { margin-right: 9px; }
.tray .ic-s { width: 13px; height: 13px; }
.tray time { width: 51px; text-align: center; line-height: 14px; }
.tray .notes { width: 28px; }
```
